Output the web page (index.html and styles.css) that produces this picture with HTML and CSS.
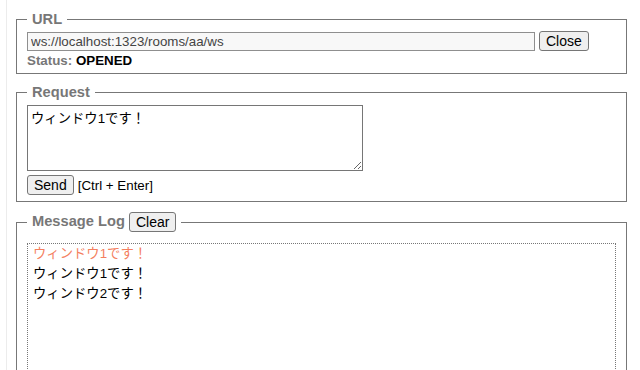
FILE: index.html
```html
<!DOCTYPE html>
<html lang="ja">
<head>
<meta charset="utf-8">
<title>WebSocket</title>
<link rel="stylesheet" href="styles.css">
</head>
<body>
<div class="page">
  <fieldset class="box">
    <legend class="title">URL</legend>
    <div class="row">
      <input class="url" type="text" value="ws://localhost:1323/rooms/aa/ws">
      <button class="btn">Close</button>
    </div>
    <div class="status"><span class="label">Status:</span> <span class="state">OPENED</span></div>
  </fieldset>

  <fieldset class="box request">
    <legend class="title">Request</legend>
    <textarea class="req">ウィンドウ1です！</textarea>
    <div class="row">
      <button class="btn">Send</button>
      <span class="hint">[Ctrl + Enter]</span>
    </div>
  </fieldset>

  <fieldset class="box last">
    <legend class="title">Message Log <button class="btn">Clear</button></legend>
    <div class="log">
      <div class="msg sent">ウィンドウ1です！</div>
      <div class="msg">ウィンドウ1です！</div>
      <div class="msg">ウィンドウ2です！</div>
    </div>
  </fieldset>
</div>
</body>
</html>
```

FILE: styles.css
```css
html, body {
  margin: 0;
  padding: 0;
  background: #fff;
  height: 100%;
  overflow: hidden;
}
body {
  font-family: "Liberation Sans", Arial, "Noto Sans CJK JP", sans-serif;
  font-size: 13.33px;
  color: #000;
}
.page {
  margin-left: 6px;
  border-left: 1px solid #ececec;
  padding: 11px 13px 0 9px;
  min-height: 100%;
  box-sizing: border-box;
}
.box {
  margin: 0 0 10px 0;
  padding: 4px 10px 5px 10px;
  border: 1px solid #777;
}
.request {
  padding-top: 5px;
  padding-bottom: 6px;
}
.title {
  padding: 0 5px;
  font-weight: bold;
  font-size: 14.67px;
  color: #777;
}
.row {
  display: flex;
  align-items: center;
  gap: 4px;
}
.url {
  width: 508px;
  height: 19px;
  box-sizing: border-box;
  margin: 0;
  padding: 1px 3px;
  border: 1px solid #8f8f8f;
  background: #f8f8f8;
  font-family: "Liberation Sans", Arial, sans-serif;
  font-size: 13.33px;
  color: #444;
}
.btn {
  margin: 0;
  height: 20px;
  padding: 0 6px;
  font-family: "Liberation Sans", Arial, sans-serif;
  font-size: 14px;
  font-weight: normal;
  color: #000;
  background: #efefef;
  border: 1px solid #767676;
  border-radius: 3px;
}
.status {
  font-size: 13.33px;
  font-weight: bold;
  margin-top: 2px;
}
.status .label { color: #777; }
.req {
  display: block;
  width: 336px;
  height: 66px;
  box-sizing: border-box;
  margin: 0 0 4px 0;
  padding: 2px 3px;
  border: 1px solid #767676;
  font-family: "Liberation Sans", Arial, "Noto Sans CJK JP", sans-serif;
  font-size: 13.33px;
  resize: both;
}
.hint {
  font-size: 13.33px;
}
.last .title .btn {
  vertical-align: middle;
}
.log {
  border: 1px dotted #777;
  height: 200px;
  padding: 0 5px;
  margin-top: 7px;
}
.msg {
  line-height: 20px;
  font-size: 13.33px;
}
.sent {
  color: #f47f5f;
}
```
